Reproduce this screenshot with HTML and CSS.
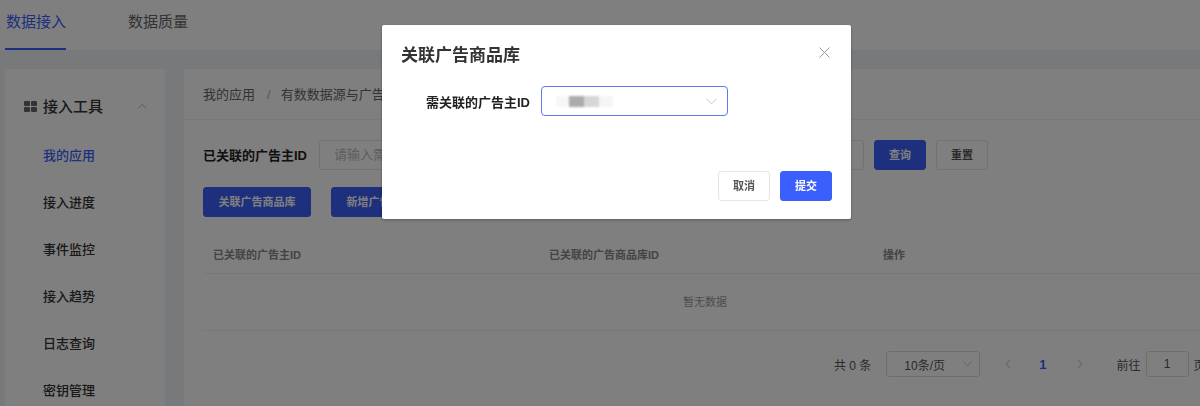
FILE: index.html
```html
<!DOCTYPE html>
<html lang="zh-CN">
<head>
    <meta charset="UTF-8">
    <meta name="viewport" content="width=device-width, initial-scale=1.0">
    <title>关联广告商品库</title>
    <link rel="stylesheet" href="styles.css">
</head>
<body>
    <!-- Top tabs -->
    <div class="tabs">
        <a class="tab active">数据接入</a>
        <a class="tab">数据质量</a>
    </div>

    <div class="layout">
        <!-- Sidebar -->
        <div class="sidebar">
            <div class="side-title">
                <svg class="grid-icon" width="13" height="11" viewBox="0 0 13 11">
                    <rect x="0" y="0" width="6" height="5" rx="1"/>
                    <rect x="7" y="0" width="6" height="5" rx="1"/>
                    <rect x="0" y="6" width="6" height="5" rx="1"/>
                    <rect x="7" y="6" width="6" height="5" rx="1"/>
                </svg>
                <span class="side-name">接入工具</span>
                <svg class="side-arrow" width="10" height="6" viewBox="0 0 10 6"><path d="M1 5.5 5 1.2l4 4.3"/></svg>
            </div>
            <a class="side-item current">我的应用</a>
            <a class="side-item">接入进度</a>
            <a class="side-item">事件监控</a>
            <a class="side-item">接入趋势</a>
            <a class="side-item">日志查询</a>
            <a class="side-item">密钥管理</a>
        </div>

        <!-- Main panel -->
        <div class="main">
            <div class="crumbs">
                <span>我的应用</span>
                <span class="crumb-sep">/</span>
                <span>有数数据源与广告</span>
            </div>
            <div class="content">
                <div class="filter-row">
                    <label class="filter-label">已关联的广告主ID</label>
                    <div class="fake-input">请输入需</div>
                    <div class="fake-input second"></div>
                    <button class="btn primary">查询</button>
                    <button class="btn">重置</button>
                </div>
                <div class="action-row">
                    <button class="btn primary wide">关联广告商品库</button>
                    <button class="btn primary wide">新增广告商品库</button>
                </div>
                <div class="table-head">
                    <div class="col-a">已关联的广告主ID</div>
                    <div class="col-b">已关联的广告商品库ID</div>
                    <div class="col-c">操作</div>
                </div>
                <div class="table-empty">暂无数据</div>
                <div class="pager">
                    <span class="total">共 0 条</span>
                    <div class="size-select">
                        <span>10条/页</span>
                        <svg class="chev" width="9" height="6" viewBox="0 0 9 6"><path d="M.5.7l4 4 4-4"/></svg>
                    </div>
                    <svg class="page-arrow" width="6" height="10" viewBox="0 0 6 10"><path d="M5.5.5 1 5l4.5 4.5"/></svg>
                    <span class="page-num">1</span>
                    <svg class="page-arrow" width="6" height="10" viewBox="0 0 6 10"><path d="M.5.5 5 5 .5 9.5"/></svg>
                    <span class="goto">前往</span>
                    <div class="page-input">1</div>
                    <span class="goto-end">页</span>
                </div>
            </div>
        </div>
    </div>

    <!-- Modal -->
    <div class="mask">
        <div class="modal">
            <div class="modal-head">
                <h2>关联广告商品库</h2>
                <svg class="close" width="11" height="11" viewBox="0 0 11 11"><path d="M.5.5l10 10M10.5.5l-10 10"/></svg>
            </div>
            <div class="modal-field">
                <label>需关联的广告主ID</label>
                <div class="select">
                    <div class="redacted">
                        <i class="r-light"></i><i class="r-dark"></i><i class="r-mid"></i><i class="r-light2"></i>
                    </div>
                    <svg class="chev" width="11" height="7" viewBox="0 0 11 7"><path d="M.5.8l5 5 5-5"/></svg>
                </div>
            </div>
            <div class="modal-foot">
                <button class="btn">取消</button>
                <button class="btn submit">提交</button>
            </div>
        </div>
    </div>
</body>
</html>
```

FILE: styles.css
```css
* {
    box-sizing: border-box;
}
html, body {
    margin: 0;
    height: 406px;
    overflow: hidden;
}
body {
    background: #f0f2f5;
    color: #333;
    font-family: 'Liberation Sans', 'Noto Sans CJK SC', sans-serif;
    font-size: 14px;
}

/* Tabs */
.tabs {
    display: flex;
    gap: 61px;
    height: 50px;
    padding-left: 5px;
    background: #fff;
}
.tab {
    height: 50px;
    padding: 11px 0 0 1px;
    font-size: 15px;
    line-height: 22px;
    color: #666;
}
.tab.active {
    color: #3a5ffb;
    border-bottom: 2px solid #3a5ffb;
}

/* Layout */
.layout {
    display: flex;
    gap: 19px;
    padding: 19px 0 0 5px;
}
.sidebar {
    flex: none;
    width: 160px;
    height: 340px;
    padding-top: 25px;
    background: #fff;
}
.side-title {
    display: flex;
    align-items: center;
    height: 24px;
    padding-left: 19px;
    font-size: 15px;
    font-weight: 500;
}
.side-name {
    padding-bottom: 2px;
}
.grid-icon {
    fill: #666;
    margin-right: 6px;
}
.side-arrow {
    margin-left: 34px;
    fill: none;
    stroke: #bbb;
}
.side-item {
    display: block;
    margin-top: 23px;
    padding-left: 38px;
    font-size: 13px;
    line-height: 24px;
    font-weight: 500;
}
.side-item:nth-child(2) {
    margin-top: 26px;
}
.side-item.current {
    color: #3a5ffb;
}

.main {
    flex: 1;
    min-width: 0;
    height: 340px;
    background: #fff;
}
.crumbs {
    display: flex;
    height: 51px;
    padding: 15px 0 0 19px;
    line-height: 22px;
    font-size: 13px;
    color: #666;
    border-bottom: 1px solid #f0f0f0;
}
.crumb-sep {
    margin: 0 10px 0 12px;
    color: #aaa;
}
.content {
    padding: 20px 0 0 19px;
}
.filter-row {
    display: flex;
    align-items: center;
    height: 30px;
}
.filter-label {
    flex: none;
    width: 116px;
    padding-bottom: 2px;
    font-size: 13px;
    font-weight: 600;
    color: #222;
}
.fake-input {
    flex: none;
    width: 240px;
    height: 30px;
    padding-left: 14px;
    line-height: 27px;
    font-size: 13px;
    color: #bbb;
    border: 1px solid #e5e5e5;
    border-radius: 3px;
}
.fake-input.second {
    width: 200px;
    margin: 0 10px 0 105px;
}
.btn {
    flex: none;
    width: 52px;
    height: 30px;
    padding: 0 0 2px;
    font-family: inherit;
    font-size: 11px;
    font-weight: 600;
    color: #555;
    background: #fff;
    border: 1px solid #e5e5e5;
    border-radius: 3px;
}
.btn.primary {
    color: #fff;
    background: #3a5ffb;
    border-color: #3a5ffb;
}
.filter-row .btn + .btn {
    margin-left: 10px;
}
.action-row {
    display: flex;
    gap: 20px;
    margin-top: 17px;
}
.btn.wide {
    width: 108px;
}
.table-head {
    display: flex;
    height: 31px;
    margin-top: 26px;
    padding-left: 10px;
    line-height: 24px;
    font-size: 11px;
    font-weight: 600;
    color: #888;
    border-bottom: 1px solid #eee;
}
.col-a {
    width: 336px;
}
.col-b {
    width: 334px;
}
.table-empty {
    height: 57px;
    padding-left: 7px;
    line-height: 56px;
    text-align: center;
    font-size: 11px;
    color: #999;
    border-bottom: 1px solid #eee;
}
.pager {
    display: flex;
    align-items: center;
    height: 26px;
    margin-top: 20px;
    padding-left: 631px;
    font-size: 12px;
    color: #555;
    white-space: nowrap;
}
.pager > * {
    flex: none;
}
.size-select {
    display: flex;
    align-items: center;
    justify-content: space-between;
    width: 94px;
    height: 26px;
    margin: 0 25px 0 15px;
    padding: 0 7px 0 17px;
    border: 1px solid #ddd;
    border-radius: 3px;
}
.chev {
    fill: none;
    stroke: #c8c8c8;
}
.page-arrow {
    fill: none;
    stroke: #bbb;
}
.page-num {
    margin: 0 30px 0 28px;
    font-size: 13px;
    font-weight: 700;
    color: #3a5ffb;
}
.goto {
    margin-left: 34px;
}
.page-input {
    width: 43px;
    height: 26px;
    margin: 0 5px;
    line-height: 24px;
    text-align: center;
    border: 1px solid #ddd;
    border-radius: 3px;
}

/* Modal sits on top of the dimmed page */
.mask {
    position: fixed;
    top: 0;
    left: 0;
    right: 0;
    bottom: 0;
    background: rgba(0, 0, 0, 0.5);
}
.modal {
    width: 469px;
    height: 194px;
    margin: 25px 0 0 382px;
    padding: 0 19px;
    background: #fff;
    border-radius: 2px;
    box-shadow: 0 1px 3px rgba(0, 0, 0, 0.3);
}
.modal-head {
    display: flex;
    align-items: center;
    justify-content: space-between;
    height: 61px;
}
.modal-head h2 {
    margin: -4px 0 0;
    font-size: 17px;
    font-weight: 600;
    color: #333;
}
.close {
    margin: -6px 2px 0 0;
    fill: none;
    stroke: #999;
}
.modal-field {
    display: flex;
    align-items: center;
    height: 30px;
}
.modal-field label {
    width: 140px;
    padding-right: 11px;
    text-align: right;
    font-size: 13px;
    font-weight: 600;
    color: #222;
}
.select {
    display: flex;
    align-items: center;
    justify-content: space-between;
    width: 187px;
    height: 30px;
    padding: 0 10px 0 14px;
    border: 1px solid #5b7cf0;
    border-radius: 4px;
}
.redacted {
    display: flex;
    height: 11px;
    filter: blur(1px);
}
.redacted i {
    display: block;
    height: 100%;
}
.r-light {
    width: 13px;
    background: #f7f7f7;
}
.r-dark {
    width: 15px;
    background: #ababab;
}
.r-mid {
    width: 15px;
    background: #d6d6d6;
}
.r-light2 {
    width: 14px;
    background: #f5f5f5;
}
.modal-foot {
    display: flex;
    justify-content: flex-end;
    gap: 10px;
    margin-top: 55px;
}
.btn.submit {
    color: #fff;
    background: #3a5ffb;
    border-color: #3a5ffb;
}
```
